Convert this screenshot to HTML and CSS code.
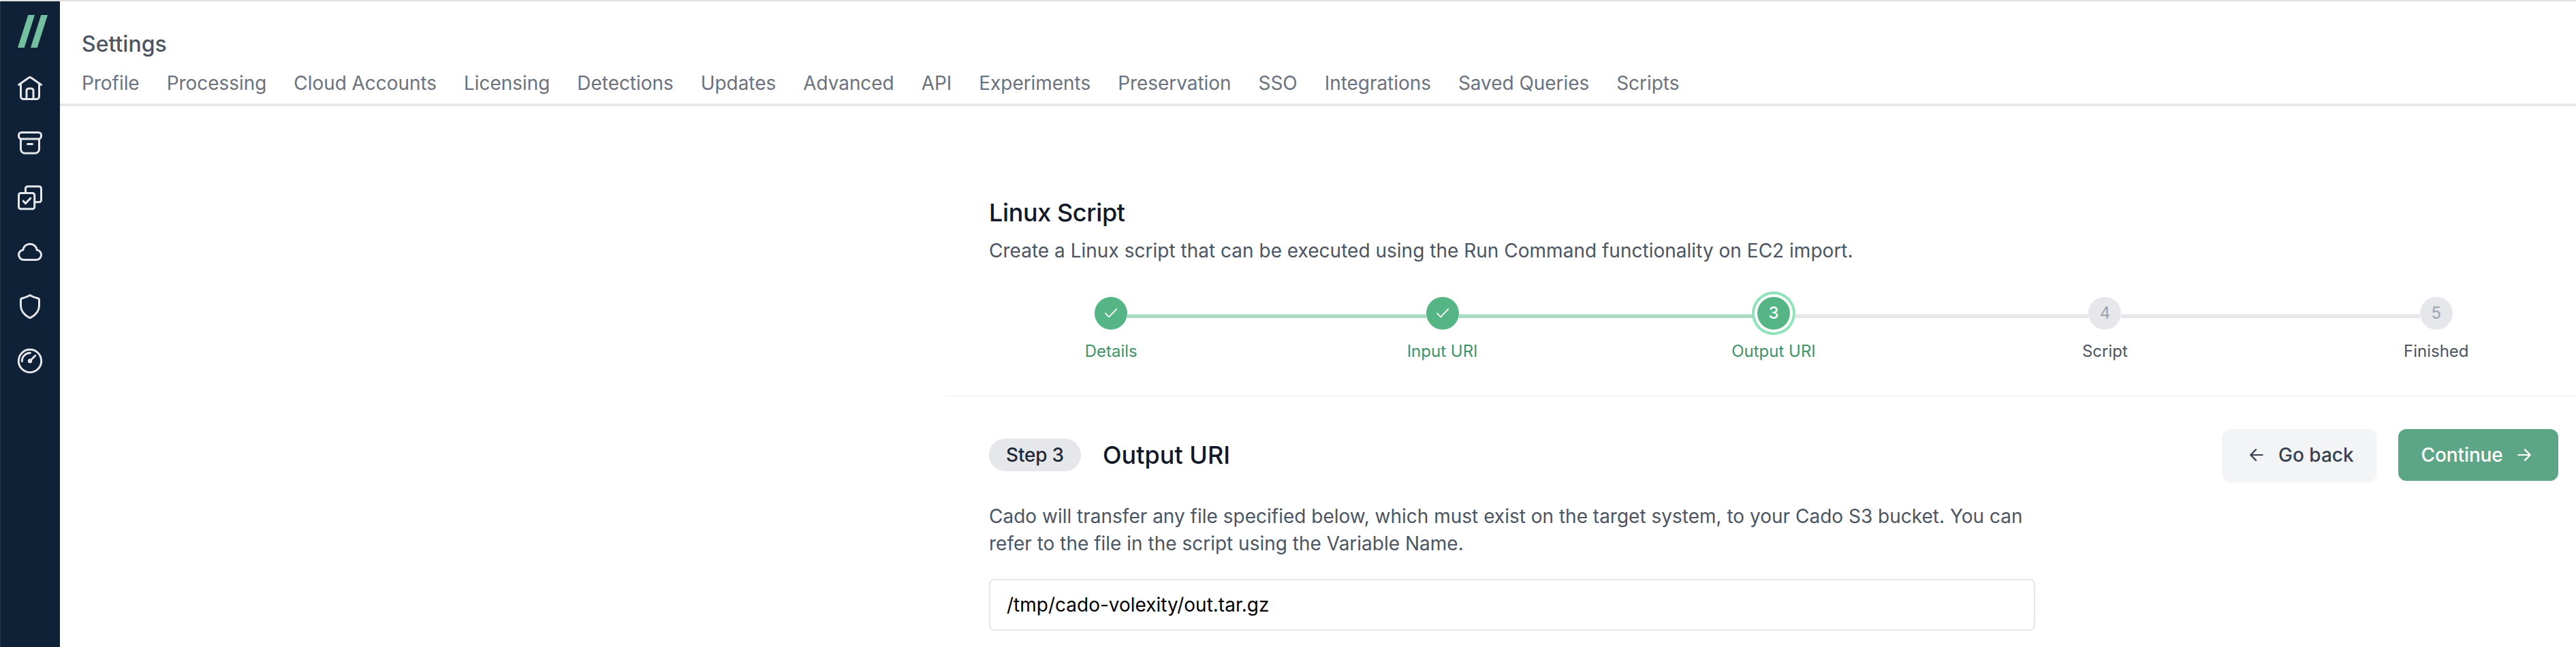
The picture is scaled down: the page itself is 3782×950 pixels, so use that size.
FILE: index.html
```html
<!DOCTYPE html>
<html lang="en">
<head>
<meta charset="utf-8">
<title>Settings</title>
<link rel="stylesheet" href="styles.css">
</head>
<body>
<div class="app">
  <aside class="sidebar">
    <svg class="logo" width="88" height="48" viewBox="0 22 88 48"><path d="M41.3 22H51L35.7 70H26zM60.3 22H70L54.7 70H45z" fill="#74bf9f"/></svg>
    <svg class="icon" width="40" height="40" viewBox="0 1 40 40"><path d="M3.5 15.5L18.4 5.1Q20 4 21.6 5.1L36.5 15.5M6.5 14V32.5a4 4 0 0 0 4 4h19a4 4 0 0 0 4-4V14M15 36V24a3 3 0 0 1 3-3h4a3 3 0 0 1 3 3V36"/></svg>
    <svg class="icon" width="40" height="40" viewBox="0 0 40 40"><rect x="3.5" y="4.5" width="33" height="9.5" rx="4"/><path d="M6.5 14.5V29a6 6 0 0 0 6 6h15a6 6 0 0 0 6-6V14.5M16.500 21.500h7"/></svg>
    <svg class="icon" width="40" height="40" viewBox="0 0 40 40"><rect x="3.5" y="13.5" width="23.2" height="23.2" rx="3"/><path d="M13.5 13V6.700a3 3 0 0 1 3-3h17a3 3 0 0 1 3 3v17a3 3 0 0 1-3 3H27M10.200 25.200L13.500 28.800L20.800 21"/></svg>
    <svg class="icon" width="40" height="40" viewBox="0 0 40 40"><path d="M11 31.500h18.500a7.200 7.200 0 0 0 7-7.400c0-3.700-2.800-6.800-6.300-7.200C29.500 11.800 25.300 8.200 20 8.200s-9.500 3.600-10.200 8.700c-3.500.4-6.300 3.500-6.300 7.200a7.300 7.300 0 0 0 7.500 7.400z"/></svg>
    <svg class="icon" width="40" height="40" viewBox="0 0 40 40"><path d="M20 3.500Q25 6.500 31.500 8Q33.500 8.400 33.500 10.500V19c0 8-5 13.200-12.300 17.300Q20 37 18.800 36.300C11.500 32.200 6.500 27 6.500 19V10.500Q6.500 8.400 8.500 8Q15 6.500 20 3.500z"/></svg>
    <svg class="icon" width="40" height="40" viewBox="0 0 40 40"><circle cx="20" cy="20" r="16.700"/><path d="M8.300 20.500A11.700 11.700 0 0 1 20.500 8.300M20 20l7.700-7.700"/><circle class="hub" cx="20" cy="20" r="3.200"/></svg>
  </aside>
  <div class="page">
    <header class="header">
      <h1 class="page-title">Settings</h1>
      <nav class="tabs">
        <a>Profile</a><a>Processing</a><a>Cloud Accounts</a><a>Licensing</a><a>Detections</a><a>Updates</a><a>Advanced</a><a>API</a><a>Experiments</a><a>Preservation</a><a>SSO</a><a>Integrations</a><a>Saved Queries</a><a>Scripts</a>
      </nav>
    </header>
    <main class="wizard">
      <section class="intro">
        <h2 class="heading">Linux Script</h2>
        <p class="text">Create a Linux script that can be executed using the Run Command functionality on EC2 import.</p>
      </section>
      <ol class="steps">
        <li class="step done"><span class="dot"><svg width="24" height="24" viewBox="0 0 24 24"><path d="M4 12.200l5.200 5.200 11-11.600"/></svg></span><span class="label">Details</span></li>
        <li class="step done"><span class="dot"><svg width="24" height="24" viewBox="0 0 24 24"><path d="M4 12.200l5.200 5.200 11-11.600"/></svg></span><span class="label">Input URI</span></li>
        <li class="step current"><span class="dot">3</span><span class="label">Output URI</span></li>
        <li class="step"><span class="dot">4</span><span class="label">Script</span></li>
        <li class="step"><span class="dot">5</span><span class="label">Finished</span></li>
      </ol>
      <section class="panel">
        <div class="panel-head">
          <span class="badge">Step 3</span>
          <h2 class="heading">Output URI</h2>
          <div class="actions">
            <button class="btn back"><svg width="28" height="28" viewBox="0 0 24 24"><path d="M19.500 12h-15m0 0l6.750 6.750M4.500 12l6.750-6.750"/></svg><span>Go back</span></button>
            <button class="btn next"><span>Continue</span><svg width="28" height="28" viewBox="0 0 24 24"><path d="M4.500 12h15m0 0l-6.750-6.750M19.500 12l-6.750 6.750"/></svg></button>
          </div>
        </div>
        <p class="text hint">Cado will transfer any file specified below, which must exist on the target system, to your Cado S3 bucket. You can refer to the file in the script using the Variable Name.</p>
        <input class="field" type="text" value="/tmp/cado-volexity/out.tar.gz">
      </section>
    </main>
  </div>
</div>
</body>
</html>
```
FILE: styles.css
```css
* { box-sizing: border-box; margin: 0; padding: 0; }
body {
  font-family: Inter, "Liberation Sans", sans-serif;
  font-size: 28px;
  line-height: 40px;
  background: #fff;
  overflow: hidden;
}
.app { display: flex; height: 950px; border-top: 2px solid #e0e0e1; }
.sidebar {
  display: flex;
  flex-direction: column;
  align-items: center;
  gap: 40px;
  flex: none;
  width: 88px;
  padding-top: 20px;
  background: #0f2136;
  box-shadow: inset 1px 0 #24364a;
}
.logo { flex: none; }
.icon { flex: none; fill: none; stroke: #e5e7eb; stroke-width: 3; stroke-linecap: round; stroke-linejoin: round; }
.hub { fill: #e5e7eb; stroke: none; }

.page { flex: 1; min-width: 0; }
.header { height: 154px; padding: 39px 32px 0; border-bottom: 4px solid #e5e7eb; }
.page-title { font-size: 32px; font-weight: 500; line-height: 48px; color: #4b5563; }
.tabs { display: flex; gap: 40px; margin-top: 13px; color: #6b7280; letter-spacing: -0.050px; white-space: nowrap; }

.wizard { width: 2432px; margin-left: 1300px; padding-top: 128px; }
.intro { padding: 0 64px; }
.heading { font-size: 36px; font-weight: 500; line-height: 56px; color: #111827; }
.intro .heading { letter-spacing: -0.400px; }
.text { color: #4b5563; }
.intro .text { margin-top: 8px; letter-spacing: 0.015px; }

.steps {
  display: grid;
  grid-template-columns: repeat(5, 1fr);
  margin-top: 48px;
  height: 146px;
  border-bottom: 2px solid #f3f4f6;
  list-style: none;
}
.step { position: relative; display: flex; flex-direction: column; align-items: center; color: #4b5563; }
/* connector back to the previous step */
.step + .step::before {
  content: "";
  position: absolute;
  top: 25px;
  left: calc(-50% + 24px);
  width: calc(100% - 48px);
  height: 5px;
  border-top: 1px solid #f0f1f3;
  background: #e5e7eb;
}
.step.done + .step::before { border-top-color: #d6eee2; background: #a9dbc2; }
/* start after the ring of the active step */
.step.current + .step::before { left: calc(-50% + 32px); width: calc(100% - 56px); }
.dot {
  position: relative;
  display: flex;
  align-items: center;
  justify-content: center;
  width: 48px;
  height: 48px;
  border-radius: 50%;
  background: #e5e7eb;
  color: #9ca3af;
  font-size: 24px;
}
.dot svg { fill: none; stroke: #fff; stroke-width: 1.750; stroke-linecap: round; stroke-linejoin: round; }
.done .dot, .current .dot { background: #56b585; color: #fff; }
.current .dot { font-weight: 500; box-shadow: 0 0 0 4px #fff, 0 0 0 8px #8fe3bb; }
.label { margin-top: 16px; font-size: 24px; line-height: 32px; }
.done .label, .current .label { color: #3f9368; }

.panel { padding: 48px 64px 0; }
.panel-head { display: flex; align-items: center; gap: 32px; height: 76px; }
.badge { width: 135px; height: 48px; border-radius: 24px; background: #e5e7eb; color: #1f2937; font-weight: 500; line-height: 48px; letter-spacing: -0.200px; text-align: center; }
.actions { display: flex; gap: 32px; margin-left: auto; }
.btn {
  display: flex;
  align-items: center;
  height: 76px;
  border: 0;
  border-radius: 12px;
  font: inherit;
  font-weight: 500;
  box-shadow: 0 2px 4px rgba(0, 0, 0, 0.050);
}
.btn svg { fill: none; stroke: currentColor; stroke-width: 1.900; stroke-linecap: round; stroke-linejoin: round; }
.back { gap: 18px; width: 226px; padding-left: 36px; background: #f3f4f6; color: #374151; }
.next { gap: 17px; width: 235px; padding-left: 33.500px; background: #5ca687; color: #fff; letter-spacing: -0.100px; }
.hint { width: 1536px; margin-top: 32px; }
.field {
  display: block;
  width: 1536px;
  height: 76px;
  margin-top: 32px;
  padding: 0 24px;
  border: 2px solid #e5e7eb;
  border-radius: 8px;
  font: inherit;
  color: #000;
}
```
